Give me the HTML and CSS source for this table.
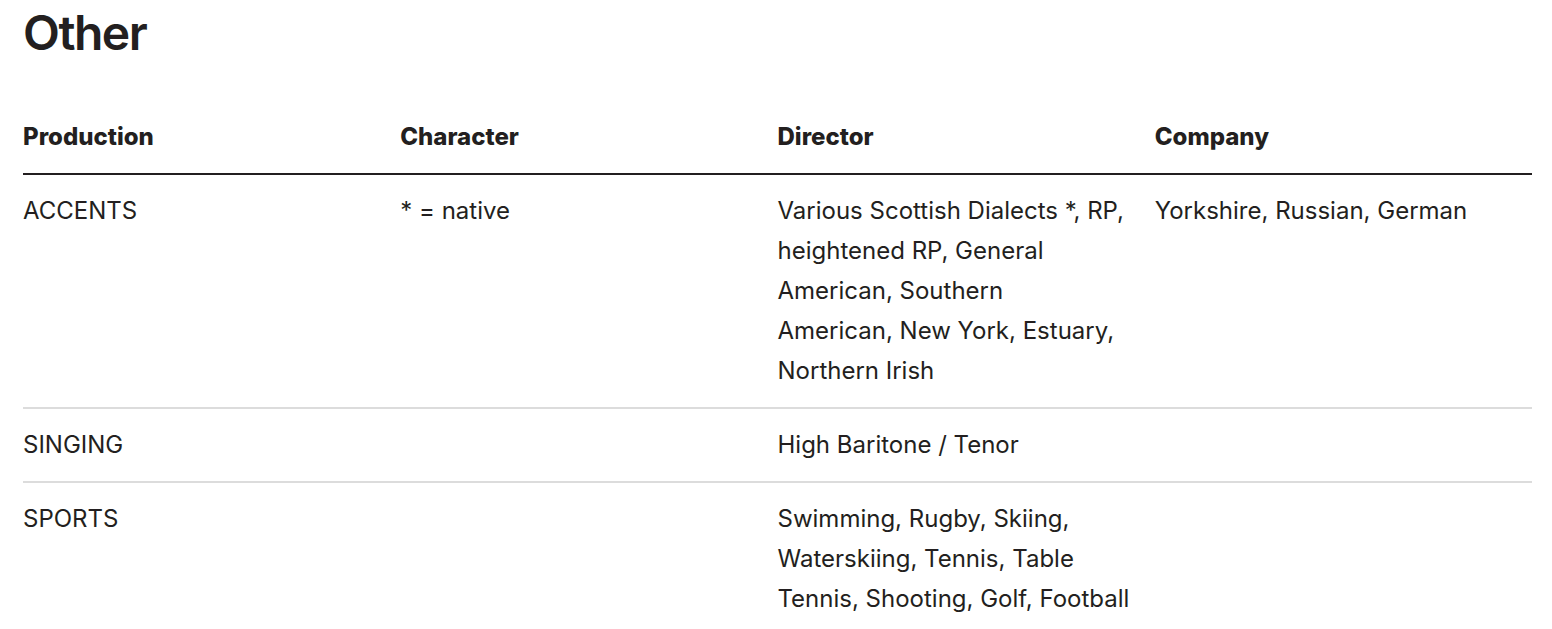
FILE: index.html
```html
<!DOCTYPE html>
<html lang="en">
<head>
<meta charset="utf-8">
<title>Other</title>
<link rel="stylesheet" href="styles.css">
</head>
<body>
<section class="section">
  <h1 class="title">Other</h1>
  <table class="skills">
    <thead>
      <tr>
        <th>Production</th>
        <th>Character</th>
        <th>Director</th>
        <th>Company</th>
      </tr>
    </thead>
    <tbody>
      <tr>
        <td>ACCENTS</td>
        <td>* = native</td>
        <td>Various Scottish Dialects *, RP, heightened RP, General American, Southern American, New York, Estuary, Northern Irish</td>
        <td>Yorkshire, Russian, German</td>
      </tr>
      <tr>
        <td>SINGING</td>
        <td></td>
        <td>High Baritone / Tenor</td>
        <td></td>
      </tr>
      <tr>
        <td>SPORTS</td>
        <td></td>
        <td>Swimming, Rugby, Skiing, Waterskiing, Tennis, Table Tennis, Shooting, Golf, Football</td>
        <td></td>
      </tr>
    </tbody>
  </table>
</section>
</body>
</html>
```
FILE: styles.css
```css
html, body {
  margin: 0;
  padding: 0;
  background: #ffffff;
}

body {
  font-family: Inter, "Noto Sans", sans-serif;
  color: #231f20;
}

.section {
  padding: 4px 20px 0 23px;
}

.title {
  margin: 0 0 39px 0;
  font-size: 48px;
  line-height: 58px;
  font-weight: 600;
  letter-spacing: -1.5px;
}

.skills {
  width: 100%;
  border-collapse: collapse;
  table-layout: fixed;
  font-size: 24px;
  line-height: 40px;
}

.skills th,
.skills td {
  text-align: left;
  vertical-align: top;
  padding: 16px 24px 16px 0;
  text-wrap: pretty;
}

.skills th {
  font-weight: 800;
  border-bottom: 2px solid #231f20;
}

.skills td {
  font-weight: 400;
}

.skills tbody tr + tr td {
  border-top: 2px solid #dcdcdc;
}
```
